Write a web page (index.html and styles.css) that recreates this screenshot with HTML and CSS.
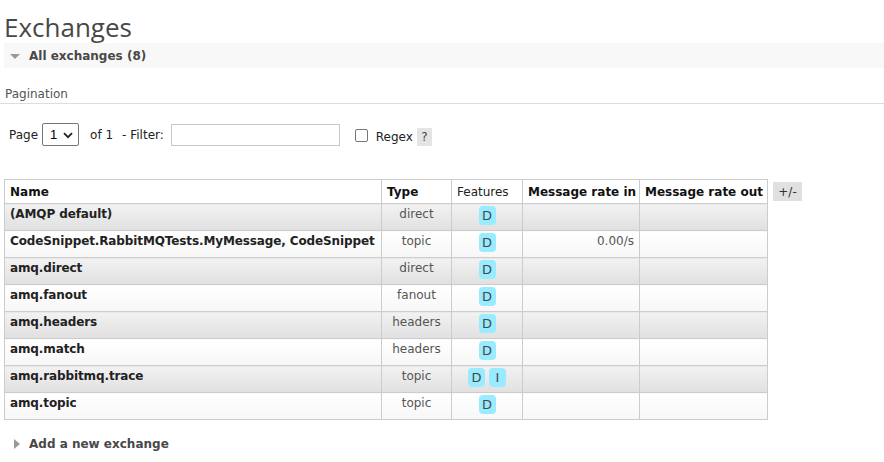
FILE: index.html
```html
<!DOCTYPE html>
<html>
<head>
<meta charset="utf-8">
<link rel="stylesheet" href="styles.css">
</head>
<body>
<div class="main">
  <h1 class="title">Exchanges</h1>
  <div class="section-bar">
    <span class="tri-down"></span>
    <span class="section-title">All exchanges (8)</span>
  </div>
  <div class="pagination-head">Pagination</div>
  <div class="pager">
    <span class="lbl">Page</span>
    <span class="select">1 <svg class="chev" width="10" height="7" viewBox="0 0 10 7"><path d="M1 1.2 L5 5.2 L9 1.2" fill="none" stroke="#222" stroke-width="1.8"/></svg></span>
    <span class="lbl of">of 1</span>
    <span class="lbl filter">- Filter:</span>
    <span class="input"></span>
    <span class="checkbox"></span>
    <span class="lbl regex">Regex</span>
    <span class="help">?</span>
  </div>
  <div class="table-wrap">
    <table class="list">
      <colgroup>
        <col class="c-name"><col class="c-type"><col class="c-feat"><col class="c-in"><col class="c-out">
      </colgroup>
      <thead>
        <tr>
          <th>Name</th>
          <th>Type</th>
          <th class="plain">Features</th>
          <th>Message rate in</th>
          <th>Message rate out</th>
        </tr>
      </thead>
      <tbody>
        <tr class="alt1"><td class="name">(AMQP default)</td><td class="type">direct</td><td class="feat"><span class="badge">D</span></td><td class="rate"></td><td class="rate"></td></tr>
        <tr class="alt2"><td class="name">CodeSnippet.RabbitMQTests.MyMessage, CodeSnippet</td><td class="type">topic</td><td class="feat"><span class="badge">D</span></td><td class="rate">0.00/s</td><td class="rate"></td></tr>
        <tr class="alt1"><td class="name">amq.direct</td><td class="type">direct</td><td class="feat"><span class="badge">D</span></td><td class="rate"></td><td class="rate"></td></tr>
        <tr class="alt2"><td class="name">amq.fanout</td><td class="type">fanout</td><td class="feat"><span class="badge">D</span></td><td class="rate"></td><td class="rate"></td></tr>
        <tr class="alt1"><td class="name">amq.headers</td><td class="type">headers</td><td class="feat"><span class="badge">D</span></td><td class="rate"></td><td class="rate"></td></tr>
        <tr class="alt2"><td class="name">amq.match</td><td class="type">headers</td><td class="feat"><span class="badge">D</span></td><td class="rate"></td><td class="rate"></td></tr>
        <tr class="alt1"><td class="name">amq.rabbitmq.trace</td><td class="type">topic</td><td class="feat"><span class="badge">D</span> <span class="badge">I</span></td><td class="rate"></td><td class="rate"></td></tr>
        <tr class="alt2"><td class="name">amq.topic</td><td class="type">topic</td><td class="feat"><span class="badge">D</span></td><td class="rate"></td><td class="rate"></td></tr>
      </tbody>
    </table>
    <span class="toggle">+/-</span>
  </div>
  <div class="add">
    <span class="tri-right"></span>
    <span class="add-title">Add a new exchange</span>
  </div>
</div>
</body>
</html>
```
FILE: styles.css
```css
html, body {
  margin: 0;
  padding: 0;
  background: #fff;
}
body {
  font-family: "DejaVu Sans", Verdana, sans-serif;
  font-size: 12px;
  color: #484848;
}
.main {
  padding: 0 0 0 4px;
}
.title {
  margin: 0;
  padding-top: 11px;
  font-family: "Open Sans", "Noto Sans", sans-serif;
  font-size: 26px;
  font-weight: normal;
  line-height: 32px;
  color: #484848;
  height: 32px;
}
.section-bar {
  display: flex;
  align-items: center;
  height: 25px;
  background: #f8f8f8;
  padding-left: 6px;
}
.tri-down {
  width: 0;
  height: 0;
  border-left: 5px solid transparent;
  border-right: 5px solid transparent;
  border-top: 5px solid #999;
  margin-right: 9px;
  margin-top: 1px;
}
.section-title {
  font-weight: bold;
  font-size: 12px;
  color: #484848;
}
.pagination-head {
  margin-top: 19px;
  padding: 0 0 2px 5px;
  margin-left: -4px;
  border-bottom: 1px solid #ddd;
  color: #555;
  font-size: 12px;
  line-height: 14px;
}
.pager {
  display: flex;
  align-items: center;
  margin-top: 19px;
  height: 23px;
  padding-left: 5px;
  color: #222;
}
.lbl {
  font-size: 12px;
  margin-top: 1px;
}
.select {
  display: inline-flex;
  align-items: center;
  justify-content: space-between;
  box-sizing: border-box;
  width: 37px;
  height: 23px;
  margin-left: 4px;
  border: 1px solid #767676;
  border-radius: 2px;
  padding: 0 5px 0 7px;
  font-family: "Liberation Sans", Arial, sans-serif;
  font-size: 13px;
  color: #000;
}
.chev { margin-top: 1px; }
.of { margin-left: 11px; }
.filter { margin-left: 9px; }
.input {
  box-sizing: border-box;
  width: 169px;
  height: 22px;
  margin-left: 7px;
  border: 1px solid #c8c8c8;
  background: #fff;
}
.checkbox {
  box-sizing: border-box;
  width: 13px;
  height: 13px;
  margin-left: 15px;
  border: 1px solid #767676;
  border-radius: 2px;
  margin-top: 2px;
}
.regex {
  margin-left: 8px;
  margin-top: 4px;
}
.help {
  display: inline-flex;
  align-items: center;
  justify-content: center;
  width: 15px;
  height: 18px;
  margin-left: 4px;
  margin-top: 4px;
  background: #e4e4e4;
  color: #444;
  font-size: 12px;
}
.table-wrap {
  display: flex;
  align-items: flex-start;
  margin-top: 33px;
}
.list {
  border-collapse: collapse;
  table-layout: fixed;
  width: 763px;
  border: 1px solid #ccc;
}
.c-name { width: 377px; }
.c-type { width: 70px; }
.c-feat { width: 71px; }
.c-in { width: 117px; }
.c-out { width: 128px; }
.list th {
  height: 23px;
  padding: 0 5px;
  font-weight: bold;
  font-size: 12px;
  color: #111;
  border: 1px solid #ccc;
  background: #fff;
  white-space: nowrap;
  text-align: left;
}
.list th.plain { font-weight: normal; color: #222; }
.list td {
  height: 27px;
  box-sizing: border-box;
  padding: 3px 5px 0 5px;
  border: 1px solid #ccc;
  vertical-align: top;
  white-space: nowrap;
  font-size: 12px;
}
.alt1 td {
  background: linear-gradient(to bottom, #f2f2f2, #e0e0e0);
}
.alt2 td {
  background: linear-gradient(to bottom, #ffffff, #f7f7f7);
}
.list td.name {
  font-weight: bold;
  color: #222;
  padding-top: 3px;
  letter-spacing: -0.12px;
}
.list td.type {
  text-align: center;
  color: #555;
}
.list td.feat {
  text-align: center;
  padding-top: 1px;
}
.list td.rate {
  text-align: right;
  color: #555;
}
.badge {
  display: inline-block;
  min-width: 17px;
  box-sizing: border-box;
  padding: 0 3px;
  height: 19px;
  line-height: 19px;
  margin-top: 1px;
  border-radius: 4px;
  background: #99ebff;
  color: #484848;
  font-size: 13px;
  text-align: center;
}
.toggle {
  margin-left: 5px;
  margin-top: 3px;
  width: 29px;
  height: 19px;
  display: inline-flex;
  align-items: center;
  justify-content: center;
  background: #e0e0e0;
  color: #333;
  font-size: 12px;
}
.add {
  display: flex;
  align-items: center;
  margin-top: 17px;
  padding-left: 10px;
}
.tri-right {
  width: 0;
  height: 0;
  border-top: 5px solid transparent;
  border-bottom: 5px solid transparent;
  border-left: 6px solid #999;
  margin-right: 9px;
}
.add-title {
  font-weight: bold;
  font-size: 12px;
  color: #484848;
}
```
